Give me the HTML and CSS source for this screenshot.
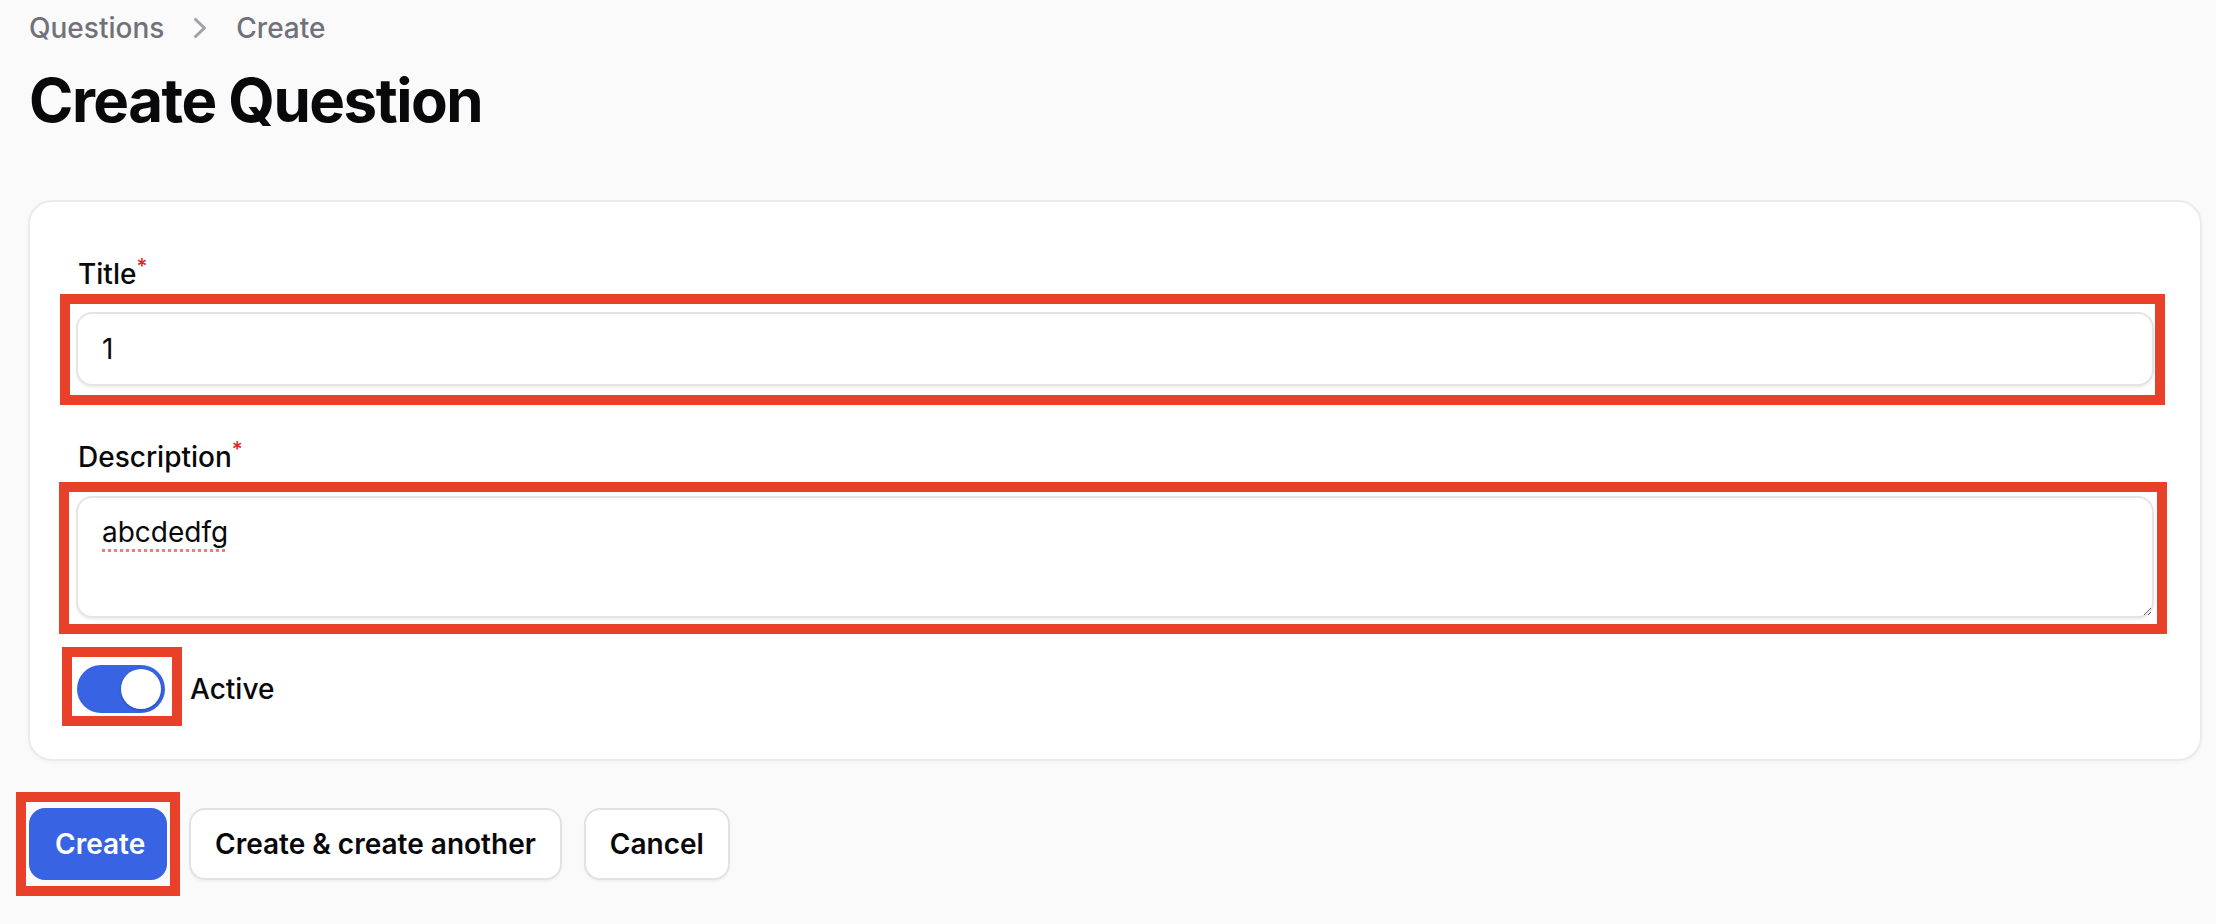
FILE: index.html
```html
<!DOCTYPE html>
<html lang="en">
<head>
<meta charset="utf-8">
<title>Create Question</title>
<link rel="stylesheet" href="styles.css">
</head>
<body>
<main class="page">
  <nav class="breadcrumbs">
    <a class="crumb" href="#">Questions</a>
    <svg class="crumb-sep" viewBox="0 0 20 20" aria-hidden="true"><path fill="currentColor" fill-rule="evenodd" d="M7.21 14.77a.75.75 0 01.02-1.06L11.168 10 7.23 6.29a.75.75 0 111.04-1.08l4.5 4.25a.75.75 0 010 1.08l-4.5 4.25a.75.75 0 01-1.06-.02z" clip-rule="evenodd"/></svg>
    <span class="crumb">Create</span>
  </nav>
  <h1 class="heading">Create Question</h1>
  <form class="form" onsubmit="return false">
    <section class="card">
      <div class="field">
        <label class="label" for="title">Title<sup class="req">*</sup></label>
        <div class="control">
          <input class="input" id="title" type="text" value="1">
          <span class="mark mark-title"></span>
        </div>
      </div>
      <div class="field field-desc">
        <label class="label" for="desc">Description<sup class="req">*</sup></label>
        <div class="control">
          <textarea class="textarea" id="desc" spellcheck="false">abcdedfg</textarea>
          <span class="mark mark-desc"></span>
        </div>
      </div>
      <div class="toggle-row">
        <div class="control toggle-wrap">
          <button type="button" class="toggle" role="switch" aria-checked="true"><span class="knob"></span></button>
          <span class="mark mark-toggle"></span>
        </div>
        <span class="toggle-label">Active</span>
      </div>
    </section>
    <div class="actions">
      <div class="control action-wrap">
        <button type="submit" class="btn btn-primary">Create</button>
        <span class="mark mark-create"></span>
      </div>
      <button type="button" class="btn btn-secondary">Create &amp; create another</button>
      <button type="button" class="btn btn-secondary">Cancel</button>
    </div>
  </form>
</main>
</body>
</html>
```

FILE: styles.css
```css
* { box-sizing: border-box; }

html, body {
  margin: 0;
  padding: 0;
  background: #fafafa;
}

body {
  font-family: Inter, "Noto Sans", "Liberation Sans", sans-serif;
  color: #09090b;
  -webkit-font-smoothing: antialiased;
  min-height: 100vh;
}

.page {
  padding: 8px 14px 40px 28px;
  display: flex;
  flex-direction: column;
}

.breadcrumbs {
  display: flex;
  align-items: center;
  gap: 16px;
  height: 40px;
  font-size: 28px;
  line-height: 40px;
  font-weight: 500;
  margin-bottom: 16px;
  padding-left: 1px;
}

.crumb {
  color: #71717a;
  text-decoration: none;
}

.crumb-sep {
  width: 40px;
  height: 40px;
  color: #a1a1aa;
  flex: none;
}

.heading {
  margin: 0;
  font-size: 60px;
  line-height: 72px;
  font-weight: 700;
  letter-spacing: -0.025em;
  color: #09090b;
  padding-left: 1px;
}

.form {
  margin-top: 64px;
  display: flex;
  flex-direction: column;
}

.card {
  background: #ffffff;
  border: 2px solid #ebebeb;
  border-radius: 24px;
  padding: 48px 46px 46px 46px;
  box-shadow: 0 2px 4px rgba(0, 0, 0, 0.03);
  display: flex;
  flex-direction: column;
}

.field {
  display: flex;
  flex-direction: column;
  gap: 14px;
}

.field-desc {
  margin-top: 47px;
  gap: 15px;
}

.label {
  font-size: 28px;
  line-height: 48px;
  font-weight: 500;
  color: #09090b;
  padding-left: 2px;
}

.req {
  color: #dc2626;
  font-weight: 500;
  font-size: 75%;
  line-height: 0;
  position: relative;
  vertical-align: baseline;
  top: -0.5em;
}

.control {
  position: relative;
  display: flex;
}

.action-wrap {
  align-self: flex-start;
  height: 72px;
}

.input,
.textarea {
  width: 100%;
  font-family: inherit;
  font-size: 28px;
  color: #09090b;
  background: #ffffff;
  border: 2px solid #e4e4e7;
  border-radius: 16px;
  box-shadow: 0 2px 2px rgba(0, 0, 0, 0.06);
  outline: none;
  margin: 0;
}

.input {
  height: 74px;
  padding: 0 24px;
  line-height: 48px;
}

.textarea {
  height: 122px;
  padding: 10px 24px;
  line-height: 48px;
  resize: vertical;
  text-decoration: underline dotted #f47c72;
  text-decoration-thickness: 3px;
  text-underline-offset: 7px;
}

.toggle-row {
  margin-top: 47px;
  display: flex;
  align-items: center;
  gap: 25px;
  height: 48px;
  padding-left: 1px;
}

.toggle {
  width: 88px;
  height: 48px;
  border: 0;
  margin: 0;
  padding: 4px;
  border-radius: 999px;
  background: #3864e4;
  display: flex;
  justify-content: flex-end;
  align-items: center;
  cursor: pointer;
}

.knob {
  width: 40px;
  height: 40px;
  border-radius: 50%;
  background: #ffffff;
  box-shadow: 0 1px 3px rgba(0, 0, 0, 0.25);
}

.toggle-label {
  font-size: 28px;
  line-height: 48px;
  font-weight: 500;
  color: #09090b;
}

.actions {
  margin-top: 47px;
  display: flex;
  align-items: flex-start;
  gap: 22px;
  padding-left: 1px;
}

.btn {
  height: 72px;
  padding: 0 24px;
  font-family: inherit;
  font-size: 28px;
  line-height: 40px;
  font-weight: 600;
  border-radius: 16px;
  margin: 0;
  cursor: pointer;
}

.btn-primary {
  background: #3864e4;
  color: #ffffff;
  border: 2px solid #3864e4;
  width: 138px;
}

.btn-secondary {
  background: #ffffff;
  color: #09090b;
  border: 2px solid #e2e2e2;
  box-shadow: 0 2px 2px rgba(0, 0, 0, 0.04);
}

/* red annotation rectangles drawn over the highlighted controls */
.mark {
  position: absolute;
  border: 10px solid #e94029;
  pointer-events: none;
  z-index: 2;
}

.mark-title {
  left: -16px;
  right: -11px;
  top: -18px;
  bottom: -19px;
}

.mark-desc {
  left: -17px;
  right: -13px;
  top: -14px;
  bottom: -16px;
}

.mark-toggle {
  left: -15px;
  right: -17px;
  top: -18px;
  bottom: -13px;
}

.mark-create {
  left: -13px;
  right: -13px;
  top: -16px;
  bottom: -16px;
}
```
